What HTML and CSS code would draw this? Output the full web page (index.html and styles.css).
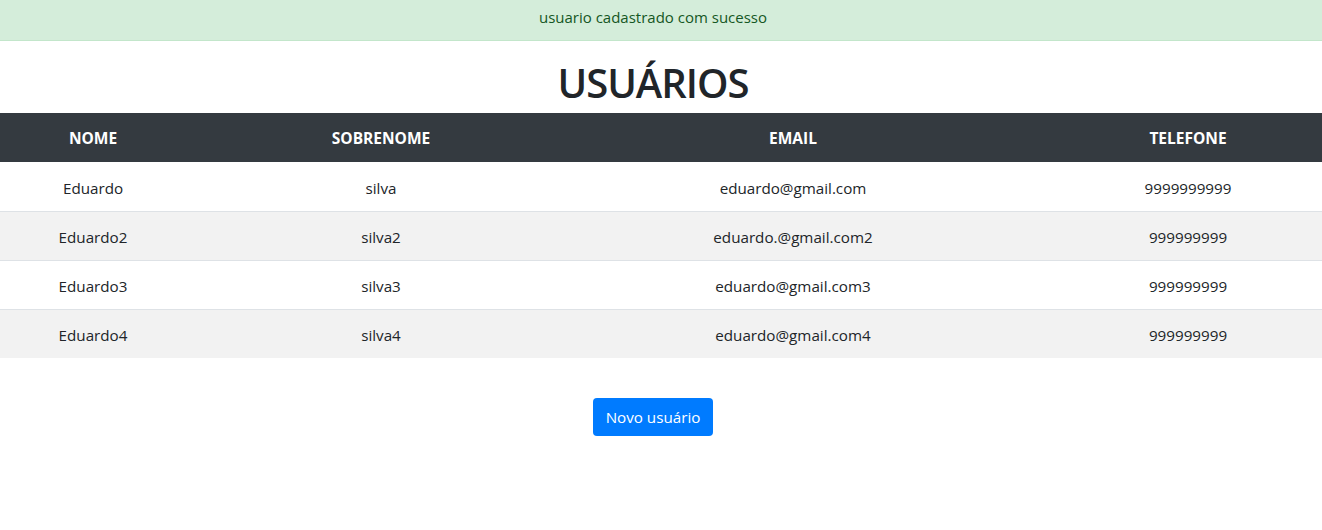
FILE: index.html
```html
<!DOCTYPE html>
<html lang="pt-BR">
<head>
<meta charset="utf-8">
<title>Usuários</title>
<link rel="stylesheet" href="styles.css">
</head>
<body>
<div class="alert">usuario cadastrado com sucesso</div>
<h1 class="title">USUÁRIOS</h1>
<div class="table-wrap">
<table class="users">
<colgroup>
<col class="c1"><col class="c2"><col class="c3"><col class="c4">
</colgroup>
<thead>
<tr><th>NOME</th><th>SOBRENOME</th><th>EMAIL</th><th>TELEFONE</th></tr>
</thead>
<tbody>
<tr><td>Eduardo</td><td>silva</td><td>eduardo@gmail.com</td><td>9999999999</td></tr>
<tr><td>Eduardo2</td><td>silva2</td><td>eduardo.@gmail.com2</td><td>999999999</td></tr>
<tr><td>Eduardo3</td><td>silva3</td><td>eduardo@gmail.com3</td><td>999999999</td></tr>
<tr><td>Eduardo4</td><td>silva4</td><td>eduardo@gmail.com4</td><td>999999999</td></tr>
</tbody>
</table>
</div>
<div class="actions"><button class="btn">Novo usuário</button></div>
</body>
</html>
```
FILE: styles.css
```css
html, body {
  margin: 0;
  padding: 0;
  background: #fff;
  color: #212529;
  font-family: "Open Sans", "Noto Sans", sans-serif;
  font-size: 16px;
  line-height: 1.5;
  overflow: hidden;
}
.alert {
  height: 41px;
  box-sizing: border-box;
  padding: 6px 16px 0 0;
  background: #d4edda;
  color: #155724;
  border-bottom: 1px solid #c3e6cb;
  text-align: center;
  font-size: 15px;
  line-height: 22px;
}
.title {
  margin: 18px 0 6px;
  text-align: center;
  font-size: 40px;
  font-weight: 600;
  letter-spacing: -1px;
  line-height: 48px;
  width: 1306px;
  color: #212529;
}
.table-wrap {
  width: 1322px;
  overflow: hidden;
}
.users {
  width: 1366px;
  border-collapse: collapse;
  table-layout: fixed;
}
.c1 { width: 186px; }
.c2 { width: 390px; }
.c3 { width: 434px; }
.c4 { width: 356px; }
.users th {
  background: #343a40;
  color: #fff;
  font-weight: 700;
  font-size: 15.5px;
  padding: 13px 12px 12px;
  height: 24px;
  line-height: 24px;
  text-align: center;
  border: 0;
}
.users td {
  padding: 13px 12px 11px;
  font-size: 15.2px;
  line-height: 24px;
  text-align: center;
  border-top: 1px solid #dee2e6;
}
.users tbody tr:nth-child(1) td { border-top: 0; padding-top: 14px; }
.users tbody tr:nth-child(even) { background: #f2f2f2; }
.actions {
  width: 1306px;
  display: flex;
  justify-content: center;
  padding-top: 40px;
}
.btn {
  background: #007bff;
  color: #fff;
  border: 0;
  border-radius: 4px;
  font-family: inherit;
  font-size: 15.2px;
  white-space: nowrap;
  padding: 7px 0;
  height: 38px;
  width: 120px;
  line-height: 24px;
}
```
